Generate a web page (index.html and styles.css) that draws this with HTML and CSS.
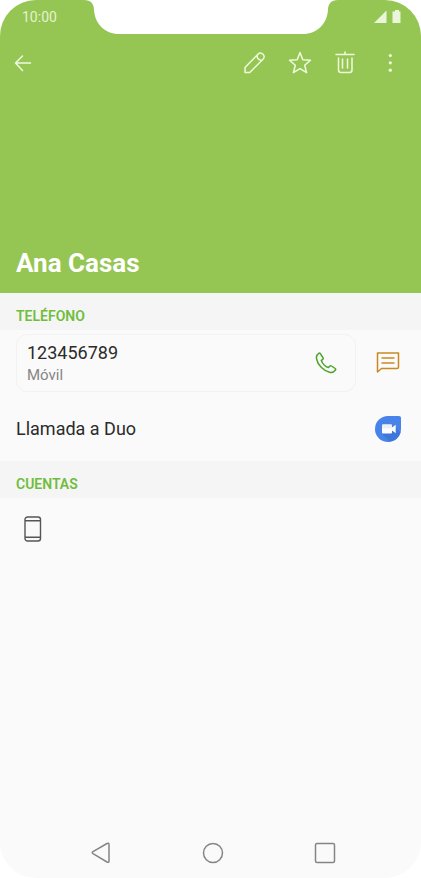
FILE: index.html
```html
<!DOCTYPE html>
<html lang="es">
<head>
<meta charset="utf-8">
<meta name="viewport" content="width=device-width, initial-scale=1">
<title>Ana Casas</title>
<link rel="stylesheet" href="styles.css">
</head>
<body>
<div class="screen">
  <header class="hero">
    <svg class="notch" width="254" height="34" viewBox="0 0 254 34" aria-hidden="true"><path fill="#fff" d="M0 0C7 0 10 4 10 10C11 24 21 34 35 34H219C233 34 243 24 244 10C244 4 247 0 254 0Z"/></svg>
    <div class="status">
      <time>10:00</time>
      <svg width="28" height="14" viewBox="0 0 28 14" fill="#eaf5d9" aria-hidden="true"><path d="M0 13L12.500 .500V13Z"/><path d="M21 0h4v1.500h1.500V13h-8V1.500H21Z"/></svg>
    </div>
    <nav class="toolbar">
      <button class="tool back" aria-label="Volver"><svg width="45" height="45" viewBox="0 0 45 45"><path d="M30.500 23H15.500M22.500 16L15.500 23L22.500 30.500"/></svg></button>
      <button class="tool" aria-label="Editar"><svg width="45" height="45" viewBox="0 0 45 45"><path d="M12 32.500V27.500L25 14.200C26.500 12.800 28.500 12.800 30 14.300C31.500 15.800 31.500 17.800 30 19.300L16.800 32.500ZM24 15.500C24.200 18.500 25.800 20.200 28.700 20.400"/></svg></button>
      <button class="tool" aria-label="Favorito"><svg width="45" height="45" viewBox="0 0 45 45"><path d="M22 12.500L24.800 19.700L32.500 20.300L26.700 25.300L28.600 32.700L22 28.700L15.400 32.700L17.300 25.300L11.500 20.300L19.200 19.700Z"/></svg></button>
      <button class="tool" aria-label="Eliminar"><svg width="45" height="45" viewBox="0 0 45 45"><path d="M13 14.500H31M22 12V14.500M15.500 18V30Q15.500 32.500 18 32.500H26.500Q29 32.500 29 30V18M19.500 19V28M24.500 19V28"/></svg></button>
      <button class="tool" aria-label="Más opciones"><svg width="45" height="45" viewBox="0 0 45 45"><g class="dots"><circle cx="22.300" cy="15.500" r="1.600"/><circle cx="22.300" cy="22.800" r="1.600"/><circle cx="22.300" cy="30.200" r="1.600"/></g></svg></button>
    </nav>
    <h1>Ana Casas</h1>
  </header>
  <main>
    <h2>TELÉFONO</h2>
    <div class="phone-row">
      <button class="card">
        <span class="lines"><span class="primary">123456789</span><span class="secondary">Móvil</span></span>
        <svg width="22" height="22" viewBox="0 0 22 22" fill="none" stroke="#4da52b" stroke-width="1.500" stroke-linejoin="round" aria-hidden="true"><path d="M4 1.200C2 2.500 1 4.500 1.600 7C2.700 13 8.500 18.800 14.500 20.300C17 20.900 19 20 20.500 18C20.900 17.300 20.700 16.900 20.200 16.500L16.500 14C15.800 13.500 15.200 13.600 14.700 14.200L13.500 15.500C10.500 14.500 7.500 11.500 6.300 8.400L7.700 7.300C8.300 6.800 8.400 6.200 7.900 5.500L5.300 1.600C4.900 1 4.500 .900 4 1.200Z"/></svg>
      </button>
      <button class="message" aria-label="Enviar mensaje"><svg width="24" height="22" viewBox="0 0 24 22" fill="none" stroke="#c88a20" stroke-width="1.500" stroke-linejoin="round"><path d="M1.500 1H22.500V15Q22.500 16.500 21 16.500H5.500L1.500 20ZM5.500 6H18.500M5.500 11H18.500"/></svg></button>
    </div>
    <button class="duo">
      <span class="primary">Llamada a Duo</span>
      <svg width="26" height="26" viewBox="0 0 26 26" aria-hidden="true"><path fill="#4783e8" d="M13 0H24Q26 0 26 2V13A13 13 0 0 1 0 13A13 13 0 0 1 13 0Z"/><path fill="#3e77da" d="M7 17.500L14.500 25.500A13 13 0 0 0 25.500 16.500L20.500 11.500L17 13Z"/><path fill="#fff" d="M8 8.500H16Q17 8.500 17 9.500V11.500L20.700 8.700V17.300L17 14.500V16.500Q17 17.500 16 17.500H8Q7 17.500 7 16.500V9.500Q7 8.500 8 8.500Z"/><path fill="#edeff3" d="M8 8.500H16Q17 8.500 17 9.500V12.500H7V9.500Q7 8.500 8 8.500Z"/></svg>
    </button>
    <h2>CUENTAS</h2>
    <div class="account">
      <svg width="18" height="26" viewBox="0 0 18 26" fill="none" stroke="#555" stroke-width="1.400" role="img" aria-label="Teléfono"><rect x="1" y="1" width="15.500" height="24" rx="2.500"/><path d="M1 4.700H16.500M1 21.300H16.500"/></svg>
    </div>
  </main>
  <nav class="system">
    <button aria-label="Atrás"><svg width="22" height="22" viewBox="0 0 22 22"><path d="M17 1.500L3 9.700Q1.500 10.700 3 11.700L17 20Q19 21 19 19V2.500Q19 .500 17 1.500Z"/></svg></button>
    <button aria-label="Inicio"><svg width="22" height="22" viewBox="0 0 22 22"><circle cx="11" cy="11" r="9.500"/></svg></button>
    <button aria-label="Recientes"><svg width="22" height="22" viewBox="0 0 22 22"><rect x="1.500" y="1.500" width="19" height="19" rx="1.500"/></svg></button>
  </nav>
</div>
</body>
</html>
```
FILE: styles.css
```css
* { box-sizing: border-box; }
body {
  margin: 0;
  background: #fff;
  font-family: Roboto, "Liberation Sans", sans-serif;
  color: #2b2b2b;
}
button {
  margin: 0;
  padding: 0;
  border: 0;
  background: none;
  font: inherit;
  color: inherit;
  text-align: left;
  cursor: pointer;
}
svg { display: block; flex: none; }
.screen {
  min-height: 100vh;
  display: flex;
  flex-direction: column;
  overflow: hidden;
  border-radius: 36px;
  background: #fafafa;
}
.hero {
  position: relative;
  display: flex;
  flex-direction: column;
  min-height: 293px;
  background: #95c653;
}
.notch {
  position: absolute;
  top: 0;
  left: 50%;
  transform: translateX(-50%);
}
.status {
  display: flex;
  justify-content: space-between;
  align-items: center;
  height: 34px;
  padding: 0 19px 0 22px;
  font-size: 14px;
  line-height: 20px;
  color: #e4f2cf;
}
.toolbar {
  display: flex;
  padding: 6px 8px 0 0;
}
.tool svg {
  fill: none;
  stroke: #f0fadf;
  stroke-width: 1.5;
  stroke-linejoin: round;
  stroke-linecap: round;
}
.back { margin-right: auto; }
.tool .dots { fill: #f0fadf; stroke: none; }
h1 {
  margin: auto 16px 13px;
  font-size: 26px;
  line-height: 34px;
  font-weight: 700;
  color: #fff;
}
main { flex: 1; }
h2 {
  margin: 0;
  padding: 14px 16px 4px;
  font-size: 14px;
  line-height: 19px;
  font-weight: 600;
  color: #70bd3c;
  background: #f5f5f5;
}
.phone-row {
  display: flex;
  align-items: center;
  gap: 20px;
  padding: 4px 21px 4px 16px;
}
.card {
  flex: 1;
  display: flex;
  justify-content: space-between;
  align-items: center;
  height: 58px;
  padding: 0 18px 0 10px;
  border: 1px solid #f2f2f2;
  border-radius: 11px;
}
.lines { display: flex; flex-direction: column; }
.primary { font-size: 18px; line-height: 24px; }
.secondary { font-size: 15px; line-height: 20px; color: #858585; }
.duo {
  display: flex;
  justify-content: space-between;
  align-items: center;
  width: 100%;
  height: 65px;
  padding: 0 20px 0 16px;
}
.account { padding: 18px 24px; }
.system {
  display: flex;
  justify-content: center;
  gap: 90px;
  padding: 14px 0 14px 4px;
}
.system svg { fill: none; stroke: #858585; stroke-width: 1.5; }
```
